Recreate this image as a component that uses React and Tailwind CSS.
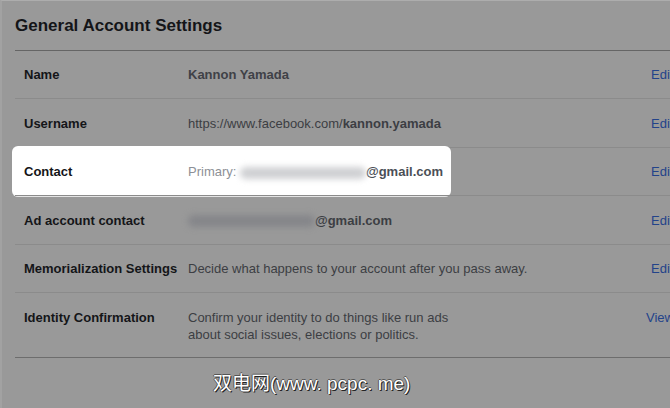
import React from "react";

const font = { fontFamily: '"Liberation Sans", Arial, sans-serif' };

function Blur({ w, light }) {
  return (
    <span className={`inline-block h-[12px] rounded-full blur-[3px] align-middle ${light ? "bg-[#cfd0d3]" : "bg-[#85868a]"}`} style={{ width: w }} />
  );
}

function Row({ label, children, link = "Edit", linkPad = "pl-[5px]", border = "border-b border-[#8b8b8b]", h = "h-[49px]", top = false }) {
  return (
    <div className={`flex ${top ? "items-start pt-[16px]" : "items-center"} ${h} ${border} pl-[9px] text-[13px] leading-[17px]`}>
      <div className="w-[164px] shrink-0 font-bold text-[#141518]">{label}</div>
      <div className="w-[458px] shrink-0 text-[#3c3e43]">{children}</div>
      <div className={`${linkPad} whitespace-nowrap text-[#23438a]`}>{link}</div>
    </div>
  );
}

export default function App() {
  return (
    <div className="relative w-[670px] h-[408px] overflow-hidden bg-[#999999] border-t border-l-2 border-t-[#adadad] border-l-[#a2a2a2]" style={font}>
      <div className="pl-[13px] pt-[14px] h-[49px] text-[17px] font-bold text-[#141518] leading-[22px]">
        General Account Settings
      </div>
      <div className="ml-[13px] w-[700px] border-t border-[#656565]">
        <Row label="Name" h="h-[48px]">
          <span className="font-bold text-[#3f4147]">Kannon Yamada</span>
        </Row>
        <Row label="Username">
          https://www.facebook.com/<span className="font-bold">kannon.yamada</span>
        </Row>
        <div className="relative">
          <div className="absolute -left-[3px] -top-[2px] w-[439px] h-[51px] rounded-[6px] bg-white border-b border-[#e4e4e4]" />
          <div className="relative">
            <Row label="Contact" h="h-[48px]">
              <span className="text-[#8d9096]">Primary: </span>
              <Blur w="126px" light />
              <span className="font-bold text-[#4b4f56]">@gmail.com</span>
            </Row>
          </div>
        </div>
        <Row label="Ad account contact">
          <Blur w="127px" />
          <span className="font-bold text-[#3c3e43]">@gmail.com</span>
        </Row>
        <Row label="Memorialization Settings" h="h-[48px]">
          Decide what happens to your account after you pass away.
        </Row>
        <Row label="Identity Confirmation" link="View" linkPad="pl-0" h="h-[65px]" top border="border-b border-[#6d6d6d]">
          Confirm your identity to do things like run ads
          <br />
          about social issues, elections or politics.
        </Row>
      </div>
      <div
        className="absolute left-[211px] top-[371px] text-[19px] leading-[24px] text-white whitespace-nowrap"
        style={{ fontFamily: '"Liberation Sans", "Noto Sans CJK SC", sans-serif', textShadow: "1px 1px 0 #222, -1px 0 0 #555, 0 -1px 0 #555" }}
      >
        双电网(www. pcpc. me)
      </div>
    </div>
  );
}
